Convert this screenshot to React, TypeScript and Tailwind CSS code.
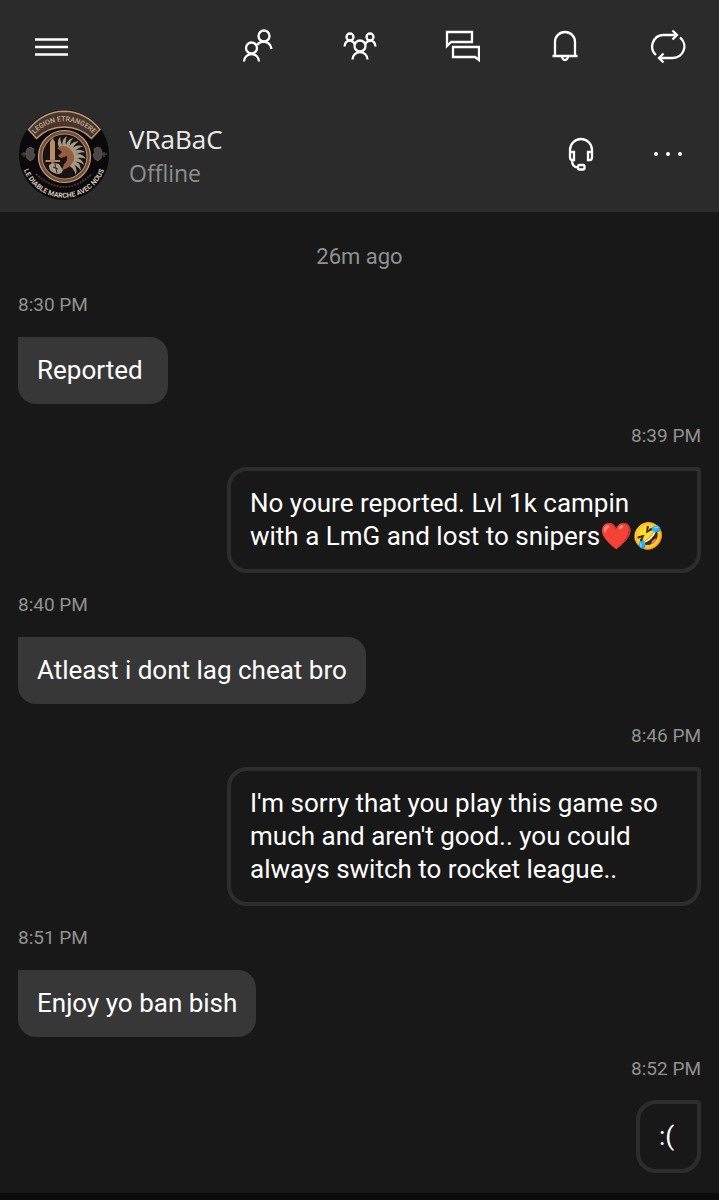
import React from "react";

type Message = {
  time: string;
  text: string;
  mine?: boolean;
};

const messages: Message[] = [
  { time: "8:30 PM", text: "Reported" },
  { time: "8:39 PM", text: "No youre reported. Lvl 1k campin with a LmG and lost to snipers❤️🤣", mine: true },
  { time: "8:40 PM", text: "Atleast i dont lag cheat bro" },
  {
    time: "8:46 PM",
    text: "I'm sorry that you play this game so much and aren't good.. you could always switch to rocket league..",
    mine: true,
  },
  { time: "8:51 PM", text: "Enjoy yo ban bish" },
  { time: "8:52 PM", text: ":(", mine: true },
];

function Icon({ children }: { children: React.ReactNode }) {
  return (
    <svg className="size-9" viewBox="0 0 36 36" fill="none" stroke="#ffffff" strokeWidth="2.3" aria-hidden="true">
      {children}
    </svg>
  );
}

function IconButton({ label, children }: { label: string; children: React.ReactNode }) {
  return (
    <button type="button" aria-label={label} className="flex size-9 items-center justify-center">
      <Icon>{children}</Icon>
    </button>
  );
}

const feathers = [-100, -82, -64, -46, -28, -10, 8, 26, 44, 62];

function Avatar() {
  return (
    <svg className="size-[90px] shrink-0" viewBox="0 0 90 90" role="img" aria-label="VRaBaC">
      <defs>
        <path id="arc-top" d="M14 26A40 40 0 0 1 76 26" />
        <path id="arc-bottom" d="M2.8 53A43 43 0 0 0 87.2 53" />
      </defs>
      <circle cx="45" cy="45" r="45" fill="#0b090c" />
      <path d="M9.5 19.5Q24 1.5 45 1.2Q66.5 1.5 81 19.5L72.5 28.5Q61 17 45 17Q29 17 17.5 28.5Z" fill="#4b342d" stroke="#b59a74" strokeWidth="1.5" />
      {/* médaillon */}
      <circle cx="45.5" cy="46.5" r="26" fill="#754a36" stroke="#c0a583" strokeWidth="1.2" />
      <circle cx="45.5" cy="46.5" r="22.5" fill="#171214" stroke="#a88564" strokeWidth="1.2" />
      {feathers.map((angle) => (
        <path
          key={angle}
          d="M52 45Q61 39 67 46Q60 44 53 49Z"
          fill="#a59a85"
          transform={`rotate(${angle} 46 47)`}
        />
      ))}
      <path d="M38 38Q44 34 50 38Q56 43 55 50Q52 58 43 60L45 54Q49 51 48 46L42 48L39 46L43 42Z" fill="#9a5c3e" />
      <path d="M33.5 28L36 32V50H31V32Z" fill="#b98b69" />
      <path d="M26.5 51H41M33.5 49V57" stroke="#b08261" strokeWidth="2.2" />
      <path d="M30 55Q34 52 40 54L44 60Q42 66 35 63Q29 60 30 55Z" fill="#a89b87" />
      <path d="M34 57L39 59M36 54L38 63" stroke="#2b211f" strokeWidth="1" />
      {/* grenades */}
      <path d="M2 44H8M5 42V47M8 39L11 37L15 39L14 43L16 45L14 49L11 51L8 48L7 44Z" fill="#4b4543" stroke="#5c5552" strokeWidth="1" />
      <path d="M88 44H82M85 42V47M82 39L79 37L75 39L76 43L74 45L76 49L79 51L82 48L83 44Z" fill="#4b4543" stroke="#5c5552" strokeWidth="1" />
      <path d="M17 64Q45 90 73 64" fill="none" stroke="#45322b" strokeWidth="2" strokeDasharray="2 1" />
      <text fill="#c4b399" fontSize="7" fontWeight="500" fontFamily="Roboto, sans-serif" textAnchor="middle">
        <textPath href="#arc-top" startOffset="50%">LEGION ETRANGERE</textPath>
      </text>
      <text fill="#d0c4b0" fontSize="7" fontWeight="700" fontFamily="Roboto, sans-serif" textAnchor="middle">
        <textPath href="#arc-bottom" startOffset="50%">LE DIABLE MARCHE AVEC NOUS</textPath>
      </text>
    </svg>
  );
}

function ChatMessage({ message }: { message: Message }) {
  if (message.mine) {
    return (
      <li className="flex flex-col items-end pt-5">
        <time className="text-[19px] leading-6 text-[#919191]">{message.time}</time>
        <p className="mt-[19px] min-w-[65px] max-w-[474px] rounded-[20px] rounded-tr-[4px] border-4 border-[#2d2d2d] px-[19px] py-4 text-[26px] leading-[33px]">
          {message.text}
        </p>
      </li>
    );
  }
  return (
    <li className="flex flex-col items-start pt-5">
      <time className="text-[19px] leading-6 text-[#919191]">{message.time}</time>
      <p className="mt-5 min-w-[150px] max-w-[474px] rounded-[18px] rounded-tl-none bg-[#373737] px-[19px] py-[17px] text-[26px] leading-[33px]">
        {message.text}
      </p>
    </li>
  );
}

export default function App() {
  return (
    <div className="flex min-h-screen flex-col bg-[#181818] font-['Roboto',sans-serif] text-white">
      <header className="bg-[#2b2b2b]">
        <nav className="flex items-center justify-between px-[33px] pt-7">
          <IconButton label="Menu">
            <path d="M2 11.5H35M2 19H35M2 26.5H35" />
          </IconButton>
          <div className="flex gap-[67px]">
            <IconButton label="Friends">
              <circle cx="13.5" cy="20" r="5.5" />
              <path d="M6 33.5A7.5 7.5 0 0 1 21 33.5" />
              <circle cx="26" cy="8" r="5.5" />
              <path d="M19 17Q21.5 13.7 26 13.7Q32.5 14.5 33.5 21" />
            </IconButton>
            <IconButton label="Clubs">
              <circle cx="19" cy="18" r="5.5" />
              <path d="M11.5 31.5A7.5 7.5 0 0 1 26.5 31.5" />
              <circle cx="9" cy="9" r="3.5" />
              <circle cx="29" cy="9" r="3.5" />
              <path d="M3.5 18.5Q4 12.7 9 12.7Q12.5 13 14 16.5M34.5 18.5Q34 12.7 29 12.7Q25.5 13 24 16.5" />
            </IconButton>
            <IconButton label="Messages">
              <path d="M3 4H28V14H7L3 18ZM9 19H35V32L31 29H9Z" />
            </IconButton>
            <IconButton label="Notifications">
              <path d="M8 28V14A10 10 0 0 1 28 14V28M5.5 28H30.5M15 28A3 4 0 0 0 21 28" />
            </IconButton>
            <IconButton label="Refresh">
              <path d="M6 27A11.5 11.5 0 0 1 13 7H27M22.5 2.5L27 7L22.5 11.5M30 9.5A11.5 11.5 0 0 1 23 30H9M13.5 25.5L9 30L13.5 34.5" />
            </IconButton>
          </div>
        </nav>
        <div className="flex items-center pt-[46px] pr-[33px] pb-3 pl-[19px]">
          <Avatar />
          <div className="ml-5 grow font-['Open_Sans',sans-serif]">
            <h1 className="text-[26px] leading-9 text-[#ebebeb]">VRaBaC</h1>
            <p className="text-[23px] leading-8 text-[#8f8f8f]">Offline</p>
          </div>
          <div className="flex gap-[51px]">
            <IconButton label="Party">
              <path d="M7 16V13A11 11 0 0 1 29 13V16M7 15H11V23H9Q7 23 7 20ZM29 15H25V23H27Q29 23 29 20ZM9 23Q9 30.5 15 30.5" />
              <rect x="15" y="28" width="6.5" height="4.5" rx="1.5" />
            </IconButton>
            <IconButton label="More">
              <g fill="#ffffff" stroke="none">
                <circle cx="6" cy="17" r="2" />
                <circle cx="18" cy="17" r="2" />
                <circle cx="30" cy="17" r="2" />
              </g>
            </IconButton>
          </div>
        </div>
      </header>

      <main className="grow px-[18px] pb-5">
        <p className="pt-[29px] text-center text-[22px] leading-8 text-[#919191]">26m ago</p>
        <ul>
          {messages.map((message) => (
            <ChatMessage key={message.time} message={message} />
          ))}
        </ul>
      </main>
      <footer className="h-[7px] bg-[#0b0b0b]" />
    </div>
  );
}
